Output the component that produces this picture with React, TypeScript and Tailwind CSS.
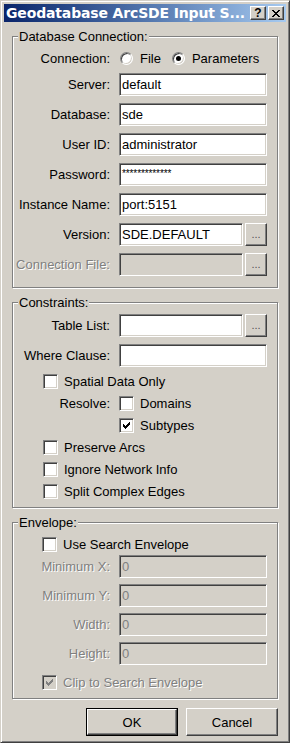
import React from 'react';

const sunken =
  'border border-t-[#808080] border-l-[#808080] border-r-white border-b-white shadow-[inset_1px_1px_0_#404040,inset_-1px_-1px_0_#d4d0c8]';
const raised =
  'border border-t-white border-l-white border-r-[#404040] border-b-[#404040] shadow-[inset_-1px_-1px_0_#808080]';

// classic 7x7 check glyph
const CHECK = [
  [6, 0], [5, 1], [6, 1], [0, 2], [4, 2], [5, 2], [6, 2], [0, 3], [1, 3], [3, 3], [4, 3], [5, 3],
  [0, 4], [1, 4], [2, 4], [3, 4], [4, 4], [1, 5], [2, 5], [3, 5], [2, 6],
];

// title bar close glyph 8x7
const CROSS = [
  [0, 0], [1, 0], [6, 0], [7, 0], [1, 1], [2, 1], [5, 1], [6, 1], [2, 2], [3, 2], [4, 2], [5, 2],
  [3, 3], [4, 3], [2, 4], [3, 4], [4, 4], [5, 4], [1, 5], [2, 5], [5, 5], [6, 5], [0, 6], [1, 6], [6, 6], [7, 6],
];

const Pixels: React.FC<{ dots: number[][]; w: number; h: number; color: string }> = ({ dots, w, h, color }) => (
  <svg width={w} height={h} viewBox={`0 0 ${w} ${h}`} shapeRendering="crispEdges">
    {dots.map(([x, y]) => (
      <rect key={`${x}-${y}`} x={x} y={y} width="1" height="1" fill={color} />
    ))}
  </svg>
);

const CheckBox: React.FC<{ checked?: boolean; disabled?: boolean }> = ({ checked = false, disabled = false }) => (
  <div
    className={`${sunken} w-[15px] h-[15px] shrink-0 flex items-center justify-center ${
      disabled ? 'bg-[#d4d0c8]' : 'bg-white'
    }`}
  >
    {checked && <Pixels dots={CHECK} w={7} h={7} color={disabled ? '#808080' : '#000000'} />}
  </div>
);

const Radio: React.FC<{ on?: boolean }> = ({ on = false }) => (
  <div className="w-[13px] h-[13px] shrink-0 rounded-full bg-white border border-t-[#808080] border-l-[#808080] border-r-white border-b-white shadow-[inset_1px_1px_0_#404040,inset_-1px_-1px_0_#d4d0c8] flex items-center justify-center">
    {on && <div className="w-[5px] h-[5px] rounded-full bg-black" />}
  </div>
);

const Field: React.FC<{ value?: React.ReactNode; disabled?: boolean; className?: string }> = ({
  value = '',
  disabled = false,
  className = '',
}) => (
  <div
    className={`${sunken} h-[23px] flex items-center pl-[2px] overflow-hidden whitespace-nowrap ${
      disabled ? 'bg-[#d4d0c8] text-[#808080]' : 'bg-white text-black'
    } ${className}`}
  >
    {value}
  </div>
);

const Browse: React.FC = () => (
  <div className={`${raised} w-[22px] h-[23px] shrink-0 bg-[#d4d0c8] flex items-center justify-center text-[11px] text-[#505050]`}>
    ...
  </div>
);

const Label: React.FC<{ children: React.ReactNode; disabled?: boolean }> = ({ children, disabled = false }) => (
  <div
    className={`flex items-center justify-end whitespace-nowrap ${
      disabled ? 'text-[#808080] [text-shadow:1px_1px_0_#ffffff]' : ''
    }`}
  >
    {children}
  </div>
);

const CheckRow: React.FC<{ label: string; checked?: boolean; disabled?: boolean; className?: string }> = ({
  label,
  checked = false,
  disabled = false,
  className = '',
}) => (
  <div className={`flex items-center gap-[6px] h-[22px] whitespace-nowrap ${className}`}>
    <CheckBox checked={checked} disabled={disabled} />
    <span className={disabled ? 'text-[#808080] [text-shadow:1px_1px_0_#ffffff]' : ''}>{label}</span>
  </div>
);

const Group: React.FC<{ title: string; className?: string; children: React.ReactNode }> = ({
  title,
  className = '',
  children,
}) => (
  <fieldset
    className={`min-w-0 m-0 border border-[#808080] shadow-[1px_1px_0_#ffffff,inset_1px_1px_0_#ffffff] ${className}`}
  >
    <legend className="ml-[5px] px-[1px] leading-[15px] bg-[#d4d0c8]">{title}</legend>
    {children}
  </fieldset>
);

const App: React.FC = () => {
  return (
    <div className="w-[290px] h-[743px] bg-[#d4d0c8] border border-t-[#d4d0c8] border-l-[#d4d0c8] border-r-[#404040] border-b-[#404040] shadow-[inset_1px_1px_0_#ffffff,inset_-1px_-1px_0_#808080] p-[3px] flex flex-col overflow-hidden">
      {/* Title bar */}
      <div className="h-[18px] shrink-0 flex items-center bg-linear-to-r from-[#0a246a] to-[#a6caf0] pl-[2px] pr-[2px]">
        <span className="flex-1 overflow-hidden whitespace-nowrap text-white font-bold text-[14px] leading-[18px] tracking-[-0.15px] font-['DejaVu_Sans',sans-serif]">
          Geodatabase ArcSDE Input S...
        </span>
        <div className="flex gap-[2px]">
          <div className={`${raised} w-[16px] h-[14px] bg-[#d4d0c8] flex items-center justify-center text-[12px] leading-none font-bold text-black font-['Liberation_Sans',sans-serif]`}>
            ?
          </div>
          <div className={`${raised} w-[16px] h-[14px] bg-[#d4d0c8] flex items-center justify-center`}>
            <Pixels dots={CROSS} w={8} h={7} color="#000000" />
          </div>
        </div>
      </div>

      {/* Dialog body */}
      <div className="flex-1 flex flex-col px-[8px] pt-[7px] text-[13px] leading-[15px] text-black font-['Liberation_Sans',Arial,sans-serif]">
        <Group title="Database Connection:" className="pt-[6px] pb-[11px] pr-[10px]">
          <div className="grid grid-cols-[97px_148px] gap-x-[9px] gap-y-[7px]">
            <Label>Connection:</Label>
            <div className="flex items-center h-[16px] pl-[1px]">
              <Radio />
              <span className="ml-[7px]">File</span>
              <div className="ml-[11px]">
                <Radio on />
              </div>
              <span className="ml-[7px]">Parameters</span>
            </div>

            <Label>Server:</Label>
            <Field value="default" />
            <Label>Database:</Label>
            <Field value="sde" />
            <Label>User ID:</Label>
            <Field value="administrator" />
            <Label>Password:</Label>
            <Field value={<span className="text-[10px] tracking-[-0.1px] -mt-[3px]">*************</span>} />
            <Label>Instance Name:</Label>
            <Field value="port:5151" />
            <Label>Version:</Label>
            <div className="flex gap-[2px]">
              <Field value="SDE.DEFAULT" className="flex-1" />
              <Browse />
            </div>
            <Label disabled>Connection File:</Label>
            <div className="flex gap-[2px]">
              <Field disabled className="flex-1" />
              <Browse />
            </div>
          </div>
        </Group>

        <Group title="Constraints:" className="mt-[7px] pt-[4px] pb-[5px] pr-[10px]">
          <div className="grid grid-cols-[97px_148px] gap-x-[9px] gap-y-[7px]">
            <Label>Table List:</Label>
            <div className="flex gap-[2px]">
              <Field className="flex-1" />
              <Browse />
            </div>
            <Label>Where Clause:</Label>
            <Field />
          </div>
          <div className="mt-[3px] flex flex-col">
            <CheckRow label="Spatial Data Only" className="pl-[30px]" />
            <div className="grid grid-cols-[97px_148px] gap-x-[9px]">
              <Label>Resolve:</Label>
              <CheckRow label="Domains" />
              <div />
              <CheckRow label="Subtypes" checked />
            </div>
            <CheckRow label="Preserve Arcs" className="pl-[30px]" />
            <CheckRow label="Ignore Network Info" className="pl-[30px]" />
            <CheckRow label="Split Complex Edges" className="pl-[30px]" />
          </div>
        </Group>

        <Group title="Envelope:" className="mt-[7px] pt-[7px] pb-[8px] pr-[10px]">
          <div className="pl-[29px] flex items-center gap-[6px] h-[15px] whitespace-nowrap">
            <CheckBox />
            <span>Use Search Envelope</span>
          </div>
          <div className="mt-[3px] grid grid-cols-[97px_148px] gap-x-[9px] gap-y-[6px]">
            <Label disabled>Minimum X:</Label>
            <Field value="0" disabled />
            <Label disabled>Minimum Y:</Label>
            <Field value="0" disabled />
            <Label disabled>Width:</Label>
            <Field value="0" disabled />
            <Label disabled>Height:</Label>
            <Field value="0" disabled />
          </div>
          <div className="mt-[10px] pl-[29px] flex items-center gap-[6px] h-[15px] whitespace-nowrap">
            <CheckBox checked disabled />
            <span className="text-[#808080] [text-shadow:1px_1px_0_#ffffff]">Clip to Search Envelope</span>
          </div>
        </Group>

        {/* Buttons */}
        <div className="mt-[9px] flex justify-end gap-[8px]">
          <div className="w-[92px] h-[28px] border border-black">
            <div className={`${raised} h-full flex items-center justify-center`}>OK</div>
          </div>
          <div className={`${raised} w-[92px] h-[28px] flex items-center justify-center`}>Cancel</div>
        </div>
      </div>
    </div>
  );
};

export default App;
